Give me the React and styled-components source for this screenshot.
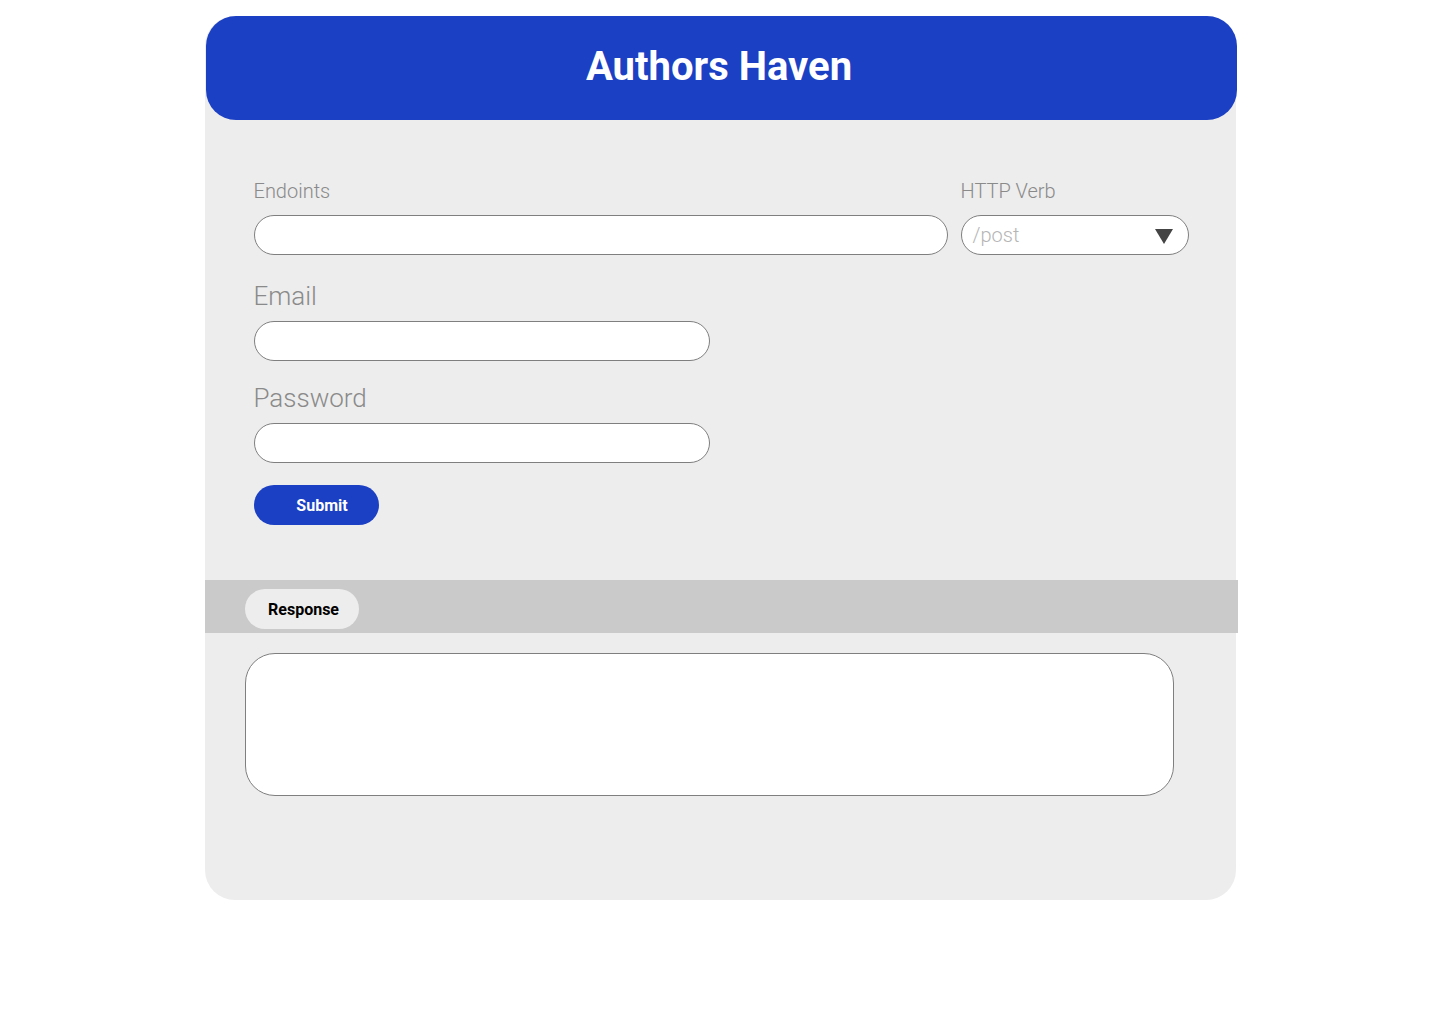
import React from "react";
import styled, { createGlobalStyle } from "styled-components";

const GlobalStyle = createGlobalStyle`
  body {
    margin: 0;
    background: #ffffff;
    font-family: Roboto, "Liberation Sans", sans-serif;
  }
`;

function App() {
  return (
    <>
      <GlobalStyle />
      <Card>
        <Header>
          <Title>Authors Haven</Title>
        </Header>
        <Form>
          <Row>
            <Field width="694px">
              <SmallLabel>Endoints</SmallLabel>
              <Input />
            </Field>
            <Field width="228px">
              <SmallLabel>HTTP Verb</SmallLabel>
              <Select>
                <Placeholder>/post</Placeholder>
                <svg width="18" height="15" viewBox="0 0 18 15">
                  <polygon points="0,0 18,0 9,15" fill="#444444" />
                </svg>
              </Select>
            </Field>
          </Row>
          <Field width="456px">
            <Label>Email</Label>
            <Input />
          </Field>
          <Field width="456px">
            <Label>Password</Label>
            <Input />
          </Field>
          <SubmitButton>Submit</SubmitButton>
        </Form>
        <TabBar>
          <Tab>Response</Tab>
        </TabBar>
        <ResponseBox />
      </Card>
    </>
  );
}

export default App;

const Card = styled.div`
  width: 1031px;
  margin: 16px auto 0;
  min-height: 884px;
  background: #ededed;
  border-radius: 30px;
  display: flex;
  flex-direction: column;
`;

const Header = styled.div`
  width: 1031px;
  height: 104px;
  margin-left: 1px;
  background: #1c40c4;
  border-radius: 30px;
  display: flex;
  align-items: center;
  justify-content: center;
`;

const Title = styled.h1`
  margin: 0 4px 4px 0;
  color: #ffffff;
  font-size: 40px;
  font-weight: 700;
`;

const Form = styled.div`
  display: flex;
  flex-direction: column;
  align-items: flex-start;
  padding: 59px 0 0 49px;
`;

const Row = styled.div`
  display: flex;
  gap: 13px;
  margin-bottom: 26px;
`;

const Field = styled.div`
  display: flex;
  flex-direction: column;
  width: ${(props) => props.width};
  margin-bottom: 22px;

  ${Row} > & {
    margin-bottom: 0;
  }
`;

const SmallLabel = styled.label`
  font-size: 20px;
  font-weight: 300;
  color: #8a8a8a;
  line-height: 24px;
  margin-bottom: 12px;
`;

const Label = styled.label`
  font-size: 26px;
  font-weight: 300;
  color: #8a8a8a;
  line-height: 30px;
  margin-bottom: 10px;
`;

const Input = styled.div`
  box-sizing: border-box;
  height: 40px;
  width: 100%;
  background: #ffffff;
  border: 1px solid #7f7f7f;
  border-radius: 20px;
`;

const Select = styled(Input)`
  display: flex;
  align-items: center;
  justify-content: space-between;
  padding: 0 15px 0 11px;

  svg {
    margin-top: 2px;
  }
`;

const Placeholder = styled.span`
  font-size: 20px;
  font-weight: 300;
  color: #b5b5b5;
`;

const SubmitButton = styled.button`
  width: 125px;
  height: 40px;
  border: none;
  border-radius: 20px;
  background: #1c40c4;
  color: #ffffff;
  font-family: Roboto, "Liberation Sans", sans-serif;
  font-size: 16px;
  font-weight: 700;
  padding: 0 0 0 12px;
  margin-bottom: 55px;
`;

const TabBar = styled.div`
  width: calc(100% + 2px);
  height: 53px;
  box-sizing: border-box;
  background: #cacaca;
  display: flex;
  align-items: flex-start;
  padding: 9px 0 0 40px;
`;

const Tab = styled.div`
  width: 114px;
  height: 40px;
  box-sizing: border-box;
  padding-left: 4px;
  border-radius: 20px;
  background: #ededed;
  display: flex;
  align-items: center;
  justify-content: center;
  font-size: 16px;
  font-weight: 700;
  color: #000000;
`;

const ResponseBox = styled.div`
  box-sizing: border-box;
  width: 929px;
  height: 143px;
  margin: 20px 0 0 40px;
  background: #ffffff;
  border: 1px solid #7f7f7f;
  border-radius: 30px;
`;
